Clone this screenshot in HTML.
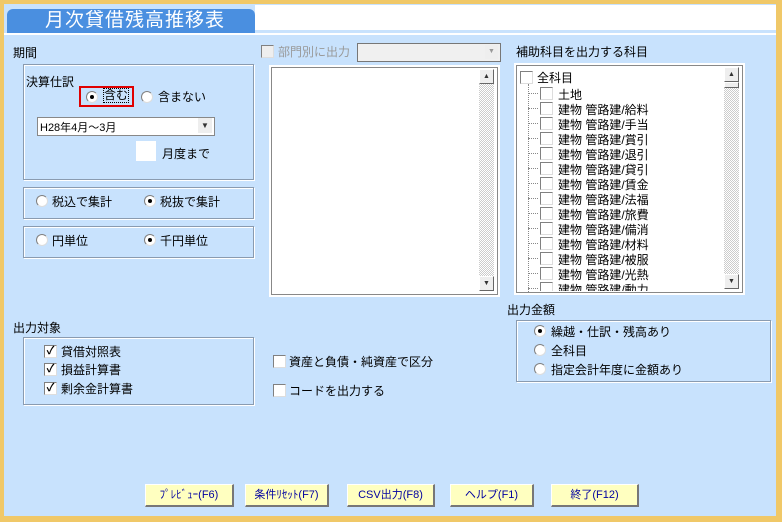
<html><head><style>
body{margin:0;width:782px;height:522px;background:#f0c868;position:relative;overflow:hidden;font-family:"Liberation Sans","Noto Sans CJK JP",sans-serif;font-size:12px;color:#000}
.a{position:absolute}
.main{left:4px;top:4px;width:772px;height:512px;background:#c8e2fd}
.grp{position:absolute;border:1px solid #8a9bb0;box-shadow:1px 1px 0 #fff inset,1px 1px 0 #fff}
.rad{position:absolute;width:10px;height:10px;border-radius:50%;background:#fff;border:1px solid #808080;border-right-color:#ddd;border-bottom-color:#ddd}
.rad.on::after{content:"";position:absolute;left:3px;top:3px;width:4px;height:4px;border-radius:50%;background:#000}
.chk{position:absolute;width:11px;height:11px;background:#fff;border:1px solid #808080;border-right-color:#ddd;border-bottom-color:#ddd;font-size:11px;line-height:11px;text-align:center;font-weight:bold}
.btn{position:absolute;top:484px;height:20px;background:#ffffc0;border:1px solid #fff;border-right:2px solid #777;border-bottom:2px solid #777;color:#0000a0;font-size:11px;text-align:center;line-height:20px}
.t{position:absolute;white-space:nowrap}
.sb{position:absolute;width:15px;background:repeating-conic-gradient(#ccc 0 25%,#fff 0 50%) 0 0/2px 2px}
.sbb{position:absolute;left:0;width:13px;height:13px;background:#eee;border:1px solid #fff;border-right-color:#666;border-bottom-color:#666;font-size:7px;line-height:13px;text-align:center;color:#333}
.tr div{height:15px;position:relative}
.tr .ln{position:absolute;left:0;top:7px;width:10px;border-top:1px dotted #888}
.tr .chk{left:12px;top:1px}
.tr span.x{position:absolute;left:30px;top:0}
</style></head><body>
<div class="a main"></div>
<div class="a" style="left:255px;top:5px;width:521px;height:25px;background:#fff"></div>
<div class="a" style="left:4px;top:33px;width:772px;height:2px;background:#fff"></div>
<div class="a" style="left:7px;top:9px;width:248px;height:24px;background:#4a8fe0;border-radius:6px 6px 0 0;color:#fff;font-size:19px;line-height:24px;padding-left:38px;box-sizing:border-box;letter-spacing:1px">月次貸借残高推移表</div>

<div class="t" style="left:13px;top:44px">期間</div>
<div class="grp" style="left:23px;top:64px;width:229px;height:114px"></div>
<div class="t" style="left:26px;top:73px">決算仕訳</div>
<div class="a" style="left:79px;top:86px;width:51px;height:17px;border:2px solid #e00000"></div>
<div class="rad on" style="left:86px;top:91px"></div>
<div class="t" style="left:103px;top:88px;border:1px dotted #000;line-height:13px">含む</div>
<div class="rad" style="left:141px;top:91px"></div>
<div class="t" style="left:158px;top:88px">含まない</div>
<div class="a" style="left:37px;top:117px;width:176px;height:17px;background:#fff;border:1px solid #888"></div>
<div class="t" style="left:40px;top:119px;font-size:11px">H28年4月～3月</div>
<div class="a" style="left:198px;top:118px;width:14px;height:15px;background:#eee;font-size:8px;text-align:center;line-height:15px;color:#333">▼</div>
<div class="a" style="left:136px;top:141px;width:20px;height:20px;background:#fff"></div>
<div class="t" style="left:162px;top:145px">月度まで</div>

<div class="grp" style="left:23px;top:187px;width:229px;height:30px"></div>
<div class="rad" style="left:36px;top:195px"></div><div class="t" style="left:52px;top:193px">税込で集計</div>
<div class="rad on" style="left:144px;top:195px"></div><div class="t" style="left:160px;top:193px">税抜で集計</div>
<div class="grp" style="left:23px;top:226px;width:229px;height:30px"></div>
<div class="rad" style="left:36px;top:234px"></div><div class="t" style="left:52px;top:232px">円単位</div>
<div class="rad on" style="left:144px;top:234px"></div><div class="t" style="left:160px;top:232px">千円単位</div>

<div class="t" style="left:13px;top:319px">出力対象</div>
<div class="grp" style="left:23px;top:337px;width:229px;height:66px"></div>
<div class="chk" style="left:44px;top:345px">✓</div><div class="t" style="left:61px;top:343px">貸借対照表</div>
<div class="chk" style="left:44px;top:363px">✓</div><div class="t" style="left:61px;top:361px">損益計算書</div>
<div class="chk" style="left:44px;top:382px">✓</div><div class="t" style="left:61px;top:380px">剰余金計算書</div>

<div class="chk" style="left:261px;top:45px;background:#eee"></div>
<div class="t" style="left:278px;top:43px;color:#999">部門別に出力</div>
<div class="a" style="left:357px;top:43px;width:142px;height:17px;background:#f0f0f0;border:1px solid #777"></div>
<div class="a" style="left:485px;top:45px;width:13px;height:14px;background:#eee;font-size:7px;text-align:center;line-height:14px;color:#999">▼</div>
<div class="a" style="left:271px;top:67px;width:225px;height:226px;background:#fff;border:1px solid #888;box-shadow:0 0 0 2px #fff"></div>
<div class="sb" style="left:479px;top:69px;height:222px"><div class="sbb" style="top:0">▲</div><div class="sbb" style="bottom:0">▼</div></div>

<div class="chk" style="left:273px;top:355px"></div><div class="t" style="left:289px;top:353px">資産と負債・純資産で区分</div>
<div class="chk" style="left:273px;top:384px"></div><div class="t" style="left:289px;top:382px">コードを出力する</div>

<div class="t" style="left:516px;top:43px">補助科目を出力する科目</div>
<div class="a" style="left:516px;top:65px;width:225px;height:226px;background:#fff;border:1px solid #888;box-shadow:0 0 0 2px #fff;overflow:hidden">
<div class="chk" style="left:3px;top:5px"></div><div class="t" style="left:20px;top:3px">全科目</div>
<div style="position:absolute;left:11px;top:18px;height:210px;border-left:1px dotted #888"></div>
</div>
<div class="a tr" style="left:528px;top:86px;width:196px;height:205px;overflow:hidden">
<div><i class="ln"></i><b class="chk"></b><span class="x">土地</span></div>
<div><i class="ln"></i><b class="chk"></b><span class="x">建物 管路建/給料</span></div>
<div><i class="ln"></i><b class="chk"></b><span class="x">建物 管路建/手当</span></div>
<div><i class="ln"></i><b class="chk"></b><span class="x">建物 管路建/賞引</span></div>
<div><i class="ln"></i><b class="chk"></b><span class="x">建物 管路建/退引</span></div>
<div><i class="ln"></i><b class="chk"></b><span class="x">建物 管路建/貸引</span></div>
<div><i class="ln"></i><b class="chk"></b><span class="x">建物 管路建/賃金</span></div>
<div><i class="ln"></i><b class="chk"></b><span class="x">建物 管路建/法福</span></div>
<div><i class="ln"></i><b class="chk"></b><span class="x">建物 管路建/旅費</span></div>
<div><i class="ln"></i><b class="chk"></b><span class="x">建物 管路建/備消</span></div>
<div><i class="ln"></i><b class="chk"></b><span class="x">建物 管路建/材料</span></div>
<div><i class="ln"></i><b class="chk"></b><span class="x">建物 管路建/被服</span></div>
<div><i class="ln"></i><b class="chk"></b><span class="x">建物 管路建/光熱</span></div>
<div><i class="ln"></i><b class="chk"></b><span class="x">建物 管路建/動力</span></div>
</div>
<div class="sb" style="left:724px;top:67px;height:222px"><div class="sbb" style="top:0">▲</div><div class="sbb" style="top:15px;height:4px"></div><div class="sbb" style="bottom:0">▼</div></div>

<div class="t" style="left:507px;top:301px">出力金額</div>
<div class="grp" style="left:516px;top:320px;width:253px;height:60px"></div>
<div class="rad on" style="left:534px;top:325px"></div><div class="t" style="left:551px;top:323px">繰越・仕訳・残高あり</div>
<div class="rad" style="left:534px;top:344px"></div><div class="t" style="left:551px;top:342px">全科目</div>
<div class="rad" style="left:534px;top:363px"></div><div class="t" style="left:551px;top:361px">指定会計年度に金額あり</div>

<div class="btn" style="left:145px;width:86px">ﾌﾟﾚﾋﾞｭｰ(F6)</div>
<div class="btn" style="left:245px;width:81px">条件ﾘｾｯﾄ(F7)</div>
<div class="btn" style="left:347px;width:85px">CSV出力(F8)</div>
<div class="btn" style="left:450px;width:81px">ヘルプ(F1)</div>
<div class="btn" style="left:551px;width:85px">終了(F12)</div>
</body></html>
